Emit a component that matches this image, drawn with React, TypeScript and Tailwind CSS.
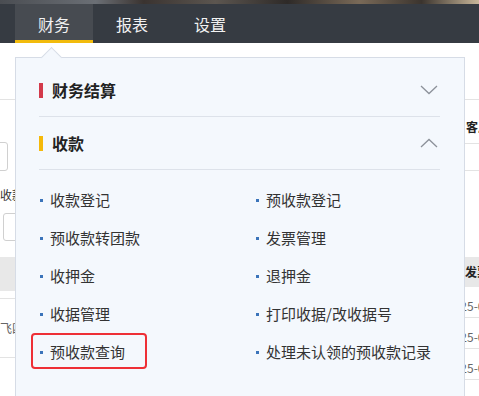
import React from "react";

const Chevron = ({ up }: { up?: boolean }) => (
  <svg width="18" height="10" viewBox="0 0 18 10" className="block">
    <polyline
      points={up ? "1,9 9,1.5 17,9" : "1,1 9,8.5 17,1"}
      fill="none"
      stroke="#8c919a"
      strokeWidth="1.3"
    />
  </svg>
);

const Item = ({ text, boxed }: { text: string; boxed?: boolean }) => (
  <div className="relative flex h-[38px] items-center">
    <span className="ml-[1px] mr-[7px] h-[3px] w-[3px] bg-[#3b74ba]" />
    <span className="text-[15px] text-[#333]">{text}</span>
    {boxed && (
      <div className="absolute left-[-8px] top-0 h-[36px] w-[116px] rounded-[4px] border-2 border-[#ee2f36]" />
    )}
  </div>
);

export default function App() {
  const left = ["收款登记", "预收款转团款", "收押金", "收据管理", "预收款查询"];
  const right = ["预收款登记", "发票管理", "退押金", "打印收据/改收据号", "处理未认领的预收款记录"];
  return (
    <div className="relative h-[396px] w-[479px] overflow-hidden bg-white font-['Microsoft_YaHei','Noto_Sans_CJK_SC',sans-serif]">
      {/* photo strip */}
      <div className="h-[4px] bg-[linear-gradient(90deg,#4a4d52,#6b6f75_20%,#3a3330_30%,#5c5650_45%,#2e2a28_60%,#7a6a58_75%,#3b342e_88%,#c9b79a)]" />
      {/* nav */}
      <div className="flex h-[39px] bg-[#363b42] pl-[15px]">
        <div className="relative flex w-[78px] items-center justify-center bg-[#474b51] text-[16px] text-[#f2f2f2]">
          财务
          <div className="absolute bottom-0 left-0 h-[3px] w-full bg-[#f2bb0c]" />
        </div>
        <div className="flex w-[78px] items-center justify-center text-[16px] text-[#f2f2f2]">报表</div>
        <div className="flex w-[78px] items-center justify-center text-[16px] text-[#f2f2f2]">设置</div>
      </div>

      {/* page behind */}
      <div className="flex">
        <div className="w-[15px] overflow-hidden text-[12px]">
          <div className="h-[57px] border-b border-[#e3e3e3]" />
          <div className="mt-[42px] -ml-[20px] h-[29px] w-[28px] rounded-[3px] border border-[#d0d0d0]" />
          <div className="mt-[15px] h-[20px] whitespace-nowrap text-[#333]">收款</div>
          <div className="mt-[7px] ml-[3px] h-[28px] w-[40px] rounded-[3px] border border-[#d0d0d0]" />
          <div className="mt-[16px] h-[34px] bg-[#e8e8e8]" />
          <div className="h-[8px] border-b border-[#e3e3e3]" />
          <div className="flex h-[59px] items-center border-b border-[#e3e3e3] whitespace-nowrap text-[#666] -ml-[12px]">张飞四</div>
        </div>
        <div className="flex-1" />
        <div className="w-[15px] overflow-hidden text-[12px]">
          <div className="h-[57px] border-b border-[#e3e3e3]" />
          <div className="flex h-[43px] items-end pb-[7px] whitespace-nowrap font-bold text-[#222] pl-[2px]">客户</div>
          <div className="h-[27px] border-t border-[#e3e3e3]" />
          <div className="h-[43px] border-t border-[#e3e3e3]" />
          <div className="h-[27px] w-[30px] border-l border-[#888]" />
          <div className="h-[17px]" />
          <div className="flex h-[30px] items-center whitespace-nowrap bg-[#e8e8e8] font-bold text-[#222] pl-[1px]">发票</div>
          <div className="flex h-[31px] items-center whitespace-nowrap border-b border-[#e3e3e3] text-[#666] -ml-[17px] pt-[8px]">2025-06</div>
          <div className="flex h-[31px] items-center whitespace-nowrap border-b border-[#e3e3e3] text-[#666] -ml-[17px] pt-[8px]">2025-06</div>
          <div className="flex h-[31px] items-center whitespace-nowrap border-b border-[#e3e3e3] text-[#666] -ml-[17px] pt-[8px]">2025-06</div>
        </div>
      </div>

      {/* dropdown panel */}
      <div className="absolute left-[15px] top-[57px] h-[360px] w-[450px] border border-[#d6dce6] bg-[#f4f8fd] pl-[23px] pr-[24px] pt-[6px]">
        <div className="absolute left-[28px] top-[-8px] h-[15px] w-[15px] rotate-45 border-l border-t border-[#d6dce6] bg-[#f4f8fd]" />
        <div className="relative">
          <div className="flex h-[53px] items-center justify-between border-b border-[#dde2ea]">
            <div className="flex items-center">
              <span className="mr-[9px] h-[15px] w-[4px] bg-[#d33a4b]" />
              <span className="text-[16px] font-bold text-[#222]">财务结算</span>
            </div>
            <div className="mr-[2px]">
              <Chevron />
            </div>
          </div>
          <div className="flex h-[53px] items-center justify-between border-b border-[#dde2ea]">
            <div className="flex items-center">
              <span className="mr-[9px] h-[15px] w-[4px] bg-[#f5b90a]" />
              <span className="text-[16px] font-bold text-[#222]">收款</span>
            </div>
            <div className="mr-[2px]">
              <Chevron up />
            </div>
          </div>
          <div className="grid grid-cols-[216px_1fr] pt-[11px]">
            <div>
              {left.map((t) => (
                <Item key={t} text={t} boxed={t === "预收款查询"} />
              ))}
            </div>
            <div>
              {right.map((t) => (
                <Item key={t} text={t} />
              ))}
            </div>
          </div>
        </div>
      </div>
    </div>
  );
}
